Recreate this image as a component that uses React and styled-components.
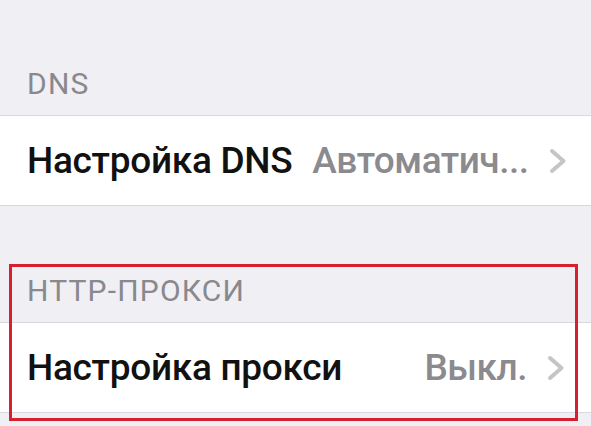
import React from "react";
import styled, { createGlobalStyle } from "styled-components";

const GlobalStyle = createGlobalStyle`
  html, body {
    margin: 0;
    padding: 0;
    background: #efeff4;
  }
  body {
    font-family: Roboto, "Noto Sans", "Liberation Sans", sans-serif;
    -webkit-font-smoothing: antialiased;
  }
`;

const Screen = styled.div`
  width: 591px;
  height: 426px;
  overflow: hidden;
  background: #efeff4;
`;

const Section = styled.section`
  position: relative;
`;

const SectionHeader = styled.div`
  height: ${(p) => p.$height}px;
  box-sizing: border-box;
  display: flex;
  align-items: flex-end;
  padding: 0 27px 14px;
  font-size: 30px;
  line-height: 34px;
  color: #88888d;
  letter-spacing: 1.2px;
`;

const Group = styled.div`
  background: #fff;
  border-top: 1px solid #d9d9dd;
  border-bottom: 1px solid #d9d9dd;
`;

const Row = styled.div`
  height: 89px;
  display: flex;
  align-items: center;
  padding: 0 26px 0 27px;
  gap: 20px;
`;

const Title = styled.span`
  font-size: 37px;
  font-weight: 500;
  letter-spacing: -0.3px;
  color: #111;
  white-space: nowrap;
  flex: 1;
`;

const Value = styled.span`
  font-size: 37px;
  font-weight: 500;
  letter-spacing: -0.5px;
  color: #8a8a8f;
  white-space: nowrap;
`;

const Chevron = styled.svg`
  width: 18px;
  height: 26px;
  flex-shrink: 0;
`;

const Highlight = styled.div`
  position: absolute;
  left: 9px;
  right: 13px;
  top: 58px;
  bottom: -8px;
  border: 3px solid #d81f2e;
  pointer-events: none;
`;

const Arrow = () => (
  <Chevron viewBox="0 0 18 26">
    <path
      d="M3 3 L14.5 13 L3 23"
      fill="none"
      stroke="#c5c5c9"
      strokeWidth="4"
      strokeLinecap="round"
      strokeLinejoin="round"
    />
  </Chevron>
);

const SettingRow = ({ title, value }) => (
  <Row>
    <Title>{title}</Title>
    <Value>{value}</Value>
    <Arrow />
  </Row>
);

export default function App() {
  return (
    <Screen>
      <GlobalStyle />
      <Section>
        <SectionHeader $height={115}>DNS</SectionHeader>
        <Group>
          <SettingRow title="Настройка DNS" value="Автоматич..." />
        </Group>
      </Section>

      <Section>
        <SectionHeader $height={116}>HTTP-ПРОКСИ</SectionHeader>
        <Group>
          <SettingRow title="Настройка прокси" value="Выкл." />
        </Group>
        <Highlight />
      </Section>
    </Screen>
  );
}
